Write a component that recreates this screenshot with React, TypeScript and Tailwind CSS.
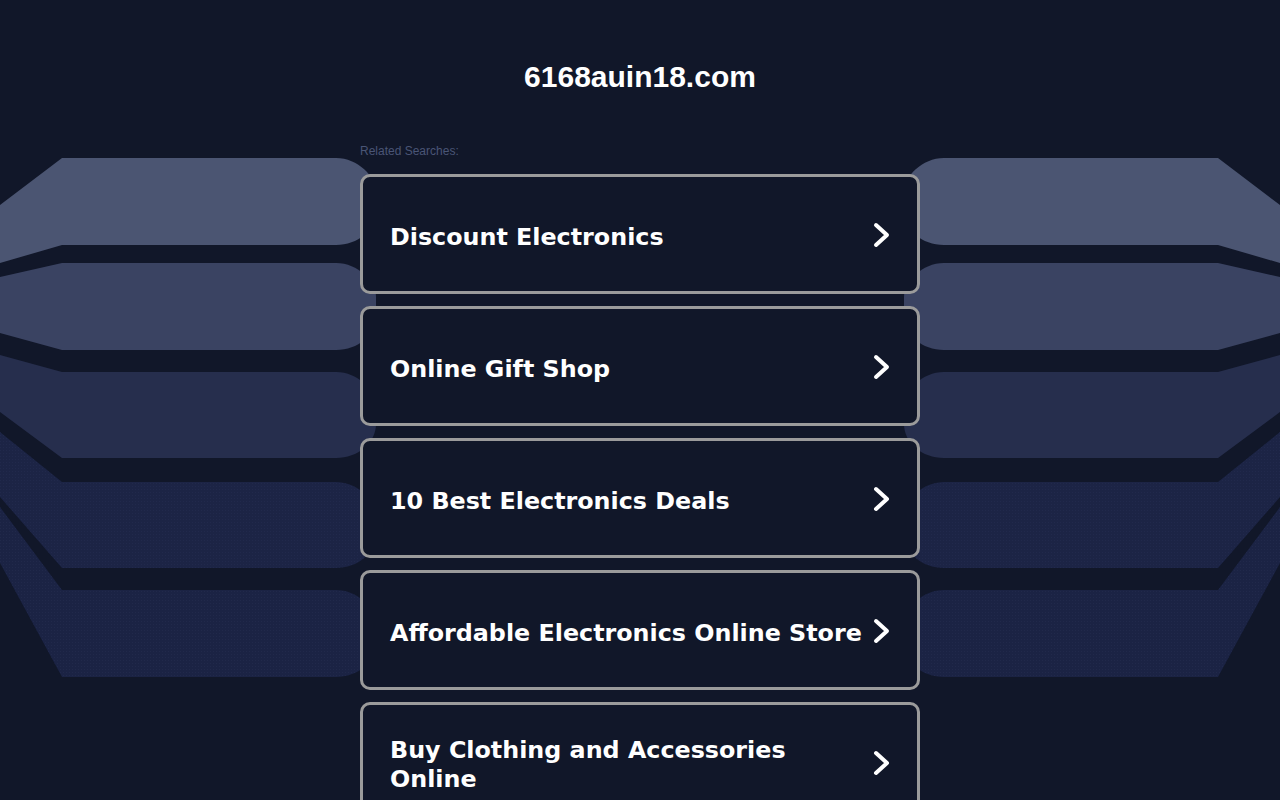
import React from "react";

const items = [
  "Discount Electronics",
  "Online Gift Shop",
  "10 Best Electronics Deals",
  "Affordable Electronics Online Store",
  "Buy Clothing and Accessories Online",
];

function band(yl1: number, yt: number, yb: number, yl2: number) {
  const r = 40;
  const h = yb - yt;
  const ry = Math.min(34, h / 2 - 2);
  return `M0 ${yl1} L62 ${yt} L${376 - r} ${yt} C${376 - r * 0.45} ${yt} 376 ${yt + ry * 0.55} 376 ${yt + ry} L376 ${yb - ry} C376 ${yb - ry * 0.45} ${376 - r * 0.45} ${yb} ${376 - r} ${yb} L62 ${yb} L0 ${yl2} Z`;
}

function Side() {
  return (
    <>
      <path d={band(205, 158, 245, 263)} fill="#4b5572" />
      <path d={band(277, 263, 350, 333)} fill="#3a4362" />
      <path d={band(355, 372, 458, 412)} fill="#262e4d" />
      <path d={band(432, 482, 568, 497)} fill="#1c2445" />
      <path d={band(432, 482, 568, 497)} fill="url(#dots)" />
      <path d={band(507, 590, 677, 563)} fill="#1b2344" />
      <path d={band(507, 590, 677, 563)} fill="url(#dots)" />
    </>
  );
}

function Chevron() {
  return (
    <svg width="18" height="26" viewBox="0 0 18 26" className="flex-none ml-[6px] mb-[5px]">
      <polyline
        points="4,3 15,13 4,23"
        fill="none"
        stroke="#ffffff"
        strokeWidth="4"
        strokeLinecap="round"
        strokeLinejoin="round"
      />
    </svg>
  );
}

export default function App() {
  return (
    <div className="relative min-h-screen w-full overflow-hidden bg-[#111729]">
      <svg
        className="absolute left-0 top-0"
        width="1280"
        height="800"
        viewBox="0 0 1280 800"
      >
        <defs>
          <pattern id="dots" width="3" height="3" patternUnits="userSpaceOnUse">
            <rect x="0" y="0" width="1" height="1" fill="#2a3358" opacity="0.35" />
          </pattern>
        </defs>
        <Side />
        <g transform="translate(1280,0) scale(-1,1)">
          <Side />
        </g>
      </svg>
      <div className="relative mx-auto w-[560px]">
        <h1 className="pt-[60px] text-center text-[30px] leading-[34px] font-bold text-white [font-family:'Liberation_Sans',Arial,sans-serif]">
          6168auin18.com
        </h1>
        <div className="mt-[50px] text-[12px] leading-[14px] text-[#4a5576] [font-family:'Liberation_Sans',Arial,sans-serif]">
          Related Searches:
        </div>
        <div className="mt-[16px] flex flex-col gap-[12px]">
          {items.map((t) => (
            <div
              key={t}
              className="flex h-[120px] items-center rounded-[10px] border-[3px] border-[#9b9b9b] bg-[#111729] pl-[27px] pr-[27px] pt-[6px]"
            >
              <span className="flex-1 text-[23.8px] leading-[29px] font-bold text-white [font-family:'DejaVu_Sans',Verdana,sans-serif]">
                {t}
              </span>
              <Chevron />
            </div>
          ))}
        </div>
      </div>
    </div>
  );
}
